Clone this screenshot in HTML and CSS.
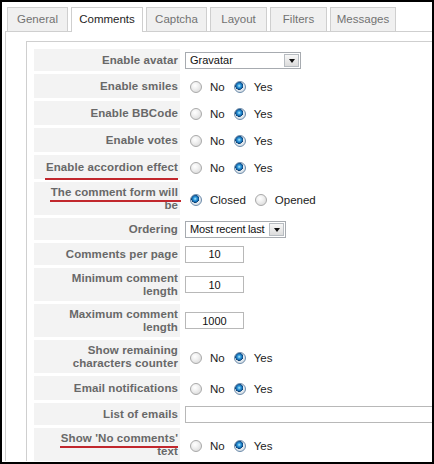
FILE: index.html
```html
<!DOCTYPE html>
<html>
<head>
<meta charset="utf-8">
<link rel="stylesheet" href="styles.css">
</head>
<body>
<div class="frame">
  <ul class="tabs">
    <li class="tab w-general">General</li>
    <li class="tab active w-comments">Comments</li>
    <li class="tab w-captcha">Captcha</li>
    <li class="tab w-layout">Layout</li>
    <li class="tab w-filters">Filters</li>
    <li class="tab w-messages">Messages</li>
  </ul>
  <div class="panel">
    <div class="fieldset">
      <div class="form-grid">
        <div class="lbl h22">Enable avatar</div>
        <div class="val"><div class="select sel-avatar"><span class="sel-text">Gravatar</span><span class="sel-btn"><span class="tri"></span></span></div></div>

        <div class="lbl h24">Enable smiles</div>
        <div class="val"><input type="radio" class="rd" name="r2"><label class="opt">No</label><input type="radio" class="rd" name="r2" checked><label class="opt">Yes</label></div>

        <div class="lbl h24">Enable BBCode</div>
        <div class="val"><input type="radio" class="rd" name="r3"><label class="opt">No</label><input type="radio" class="rd" name="r3" checked><label class="opt">Yes</label></div>

        <div class="lbl h24">Enable votes</div>
        <div class="val"><input type="radio" class="rd" name="r4"><label class="opt">No</label><input type="radio" class="rd" name="r4" checked><label class="opt">Yes</label></div>

        <div class="lbl h24"><span class="mark mark-low">Enable accordion effect</span></div>
        <div class="val"><input type="radio" class="rd" name="r5"><label class="opt">No</label><input type="radio" class="rd" name="r5" checked><label class="opt">Yes</label></div>

        <div class="lbl h33"><span class="lbl-text"><span class="mark mark-wide">The comment form will</span> be</span></div>
        <div class="val"><input type="radio" class="rd" name="r6" checked><label class="opt">Closed</label><input type="radio" class="rd" name="r6"><label class="opt">Opened</label></div>

        <div class="lbl h22">Ordering</div>
        <div class="val"><div class="select sel-order"><span class="sel-text">Most recent last</span><span class="sel-btn"><span class="tri"></span></span></div></div>

        <div class="lbl h22">Comments per page</div>
        <div class="val"><input type="text" class="txt num" value="10"></div>

        <div class="lbl h33"><span class="lbl-text">Minimum comment length</span></div>
        <div class="val"><input type="text" class="txt num" value="10"></div>

        <div class="lbl h33"><span class="lbl-text">Maximum comment length</span></div>
        <div class="val"><input type="text" class="txt num" value="1000"></div>

        <div class="lbl h33"><span class="lbl-text">Show remaining characters counter</span></div>
        <div class="val"><input type="radio" class="rd" name="r11"><label class="opt">No</label><input type="radio" class="rd" name="r11" checked><label class="opt">Yes</label></div>

        <div class="lbl h24">Email notifications</div>
        <div class="val"><input type="radio" class="rd" name="r12"><label class="opt">No</label><input type="radio" class="rd" name="r12" checked><label class="opt">Yes</label></div>

        <div class="lbl h22">List of emails</div>
        <div class="val"><input type="text" class="txt wide" value=""></div>

        <div class="lbl h33"><span class="lbl-text"><span class="mark">Show 'No comments'</span> text</span></div>
        <div class="val"><input type="radio" class="rd" name="r14"><label class="opt">No</label><input type="radio" class="rd" name="r14" checked><label class="opt">Yes</label></div>
      </div>
    </div>
  </div>
</div>
</body>
</html>
```

FILE: styles.css
```css
html, body {
  margin: 0;
  padding: 0;
  background: #fff;
}

.frame {
  width: 434px;
  height: 464px;
  box-sizing: border-box;
  border: 2px solid #000;
  overflow: hidden;
  background: #fff;
  font-family: "Liberation Sans", Arial, sans-serif;
  font-size: 11px;
}

.tabs {
  list-style: none;
  margin: 0;
  padding: 5px 0 0 5px;
  display: flex;
  gap: 3px;
  position: relative;
  z-index: 1;
}

.tab {
  box-sizing: border-box;
  height: 24px;
  border: 1px solid #cfcfcf;
  border-bottom: none;
  background: #f0f0f0;
  color: #727272;
  font-size: 11.5px;
  line-height: 23px;
  text-align: center;
}

.tab.active {
  background: #fff;
  color: #1e1e1e;
  height: 25px;
  margin-bottom: -1px;
}

.w-general { width: 61px; }
.w-comments { width: 72px; }
.w-captcha { width: 61px; }
.w-layout { width: 57px; }
.w-filters { width: 57px; }
.w-messages { width: 66px; }

.panel {
  margin-left: 3px;
  width: 520px;
  border-top: 1px solid #cfcfcf;
  border-left: 1px solid #cfcfcf;
  padding: 9px 0 0 20px;
}

.fieldset {
  border-top: 1px solid #cfcfcf;
  border-left: 1px solid #cfcfcf;
  padding: 7px 0 0 7px;
}

.form-grid {
  display: grid;
  grid-template-columns: 146px 1fr;
  column-gap: 3px;
  row-gap: 3px;
}

.lbl {
  box-sizing: border-box;
  background: #f3f3f3;
  color: #686868;
  font-weight: bold;
  font-size: 11.5px;
  letter-spacing: 0.1px;
  line-height: 13px;
  padding: 0 2px 0 7px;
  display: flex;
  align-items: center;
  justify-content: flex-end;
  text-align: right;
}

.lbl-text {
  display: block;
  padding-top: 1px;
}

.h22 { height: 22px; }
.h24 { height: 24px; }
.h33 { height: 33px; }

.val {
  display: flex;
  align-items: center;
  padding-left: 2px;
  color: #222;
}

.mark {
  position: relative;
}

.mark::after {
  content: "";
  position: absolute;
  left: -1px;
  right: 0;
  top: calc(100% + 2px);
  height: 2px;
  background: #c1272d;
}

.mark-low::after {
  top: calc(100% + 4px);
}

.mark-wide::after {
  right: -3px;
}

/* radios */
.rd {
  appearance: none;
  -webkit-appearance: none;
  box-sizing: border-box;
  width: 12px;
  height: 12px;
  margin: 2px 8px 0 5px;
  border-radius: 50%;
  border: 1px solid #a9a9a9;
  background: radial-gradient(circle at 40% 35%, #ffffff 0, #f2f2f2 35%, #d3d3d3 100%);
  flex: none;
}

.rd + .opt + .rd {
  margin-left: 9px;
}

.rd:checked {
  border-color: #6d8cab;
  background:
    radial-gradient(circle at 42% 38%, #bfefff 0, #3aa3e0 1.5px, #1268b0 3px, #0b3e6e 3.8px, rgba(0,0,0,0) 4.2px),
    radial-gradient(circle at 40% 35%, #ffffff 0, #eef3f7 40%, #c6cfd8 100%);
}

.opt {
  font-size: 11.5px;
  color: #222;
  padding-top: 2px;
}

/* selects */
.select {
  box-sizing: border-box;
  height: 17px;
  border: 1px solid #a7abb0;
  background: #fff;
  display: flex;
  align-items: center;
  justify-content: space-between;
  padding: 0 1px 0 4px;
  color: #111;
  font-size: 11px;
}

.sel-avatar { width: 116px; }
.sel-order { width: 101px; letter-spacing: -0.2px; }

.sel-btn {
  box-sizing: border-box;
  width: 15px;
  height: 13px;
  border: 1px solid #b7bcc1;
  background: linear-gradient(#f7f7f7, #dcdcdc);
  display: flex;
  align-items: center;
  justify-content: center;
}

.tri {
  width: 0;
  height: 0;
  border-left: 3.5px solid transparent;
  border-right: 3.5px solid transparent;
  border-top: 4px solid #111;
  margin-top: 2px;
}

/* text inputs */
.txt {
  box-sizing: border-box;
  height: 17px;
  margin: 0;
  border: 1px solid #b8b8b8;
  background: #fff;
  font-family: "Liberation Sans", Arial, sans-serif;
  font-size: 11px;
  color: #111;
  padding: 0 2px;
}

.num {
  width: 59px;
  text-align: center;
}

.wide {
  width: 320px;
}
```
